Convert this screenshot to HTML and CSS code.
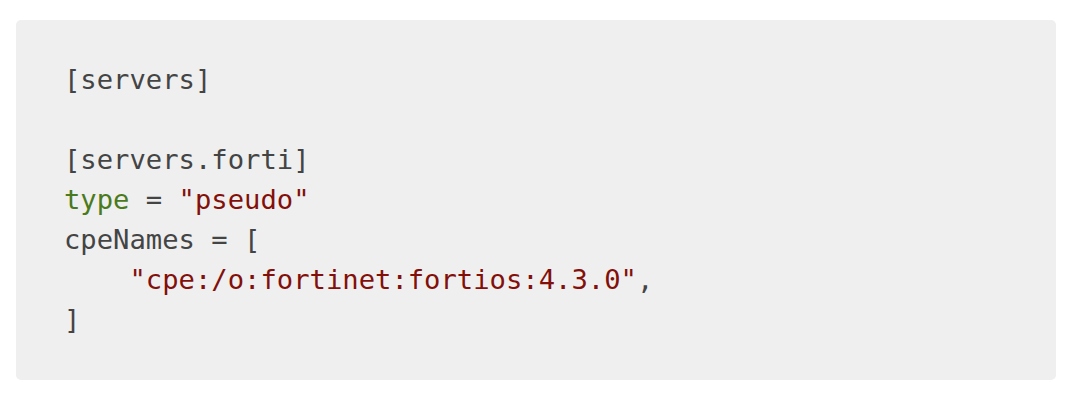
FILE: index.html
```html
<!DOCTYPE html>
<html>
<head>
<meta charset="utf-8">
<link rel="stylesheet" href="styles.css">
</head>
<body>
<div class="code">
  <div class="line">[servers]</div>
  <div class="line"></div>
  <div class="line">[servers.forti]</div>
  <div class="line"><span class="attr">type</span> = <span class="str">"pseudo"</span></div>
  <div class="line">cpeNames = [</div>
  <div class="line">    <span class="str">"cpe:/o:fortinet:fortios:4.3.0"</span>,</div>
  <div class="line">]</div>
</div>
</body>
</html>
```
FILE: styles.css
```css
html, body {
  margin: 0;
  padding: 0;
  background: #ffffff;
}
body {
  padding: 20px 18px 20px 16px;
}
.code {
  display: flex;
  flex-direction: column;
  width: 1040px;
  box-sizing: border-box;
  background: #efefef;
  border-radius: 5px;
  padding: 40px 48px 40px 48px;
  font-family: "DejaVu Sans Mono", monospace;
  font-size: 27.2px;
  line-height: 40px;
  color: #444444;
}
.line {
  white-space: pre;
  height: 40px;
}
.attr {
  color: #4a7a1c;
}
.str {
  color: #830f0a;
}
```
